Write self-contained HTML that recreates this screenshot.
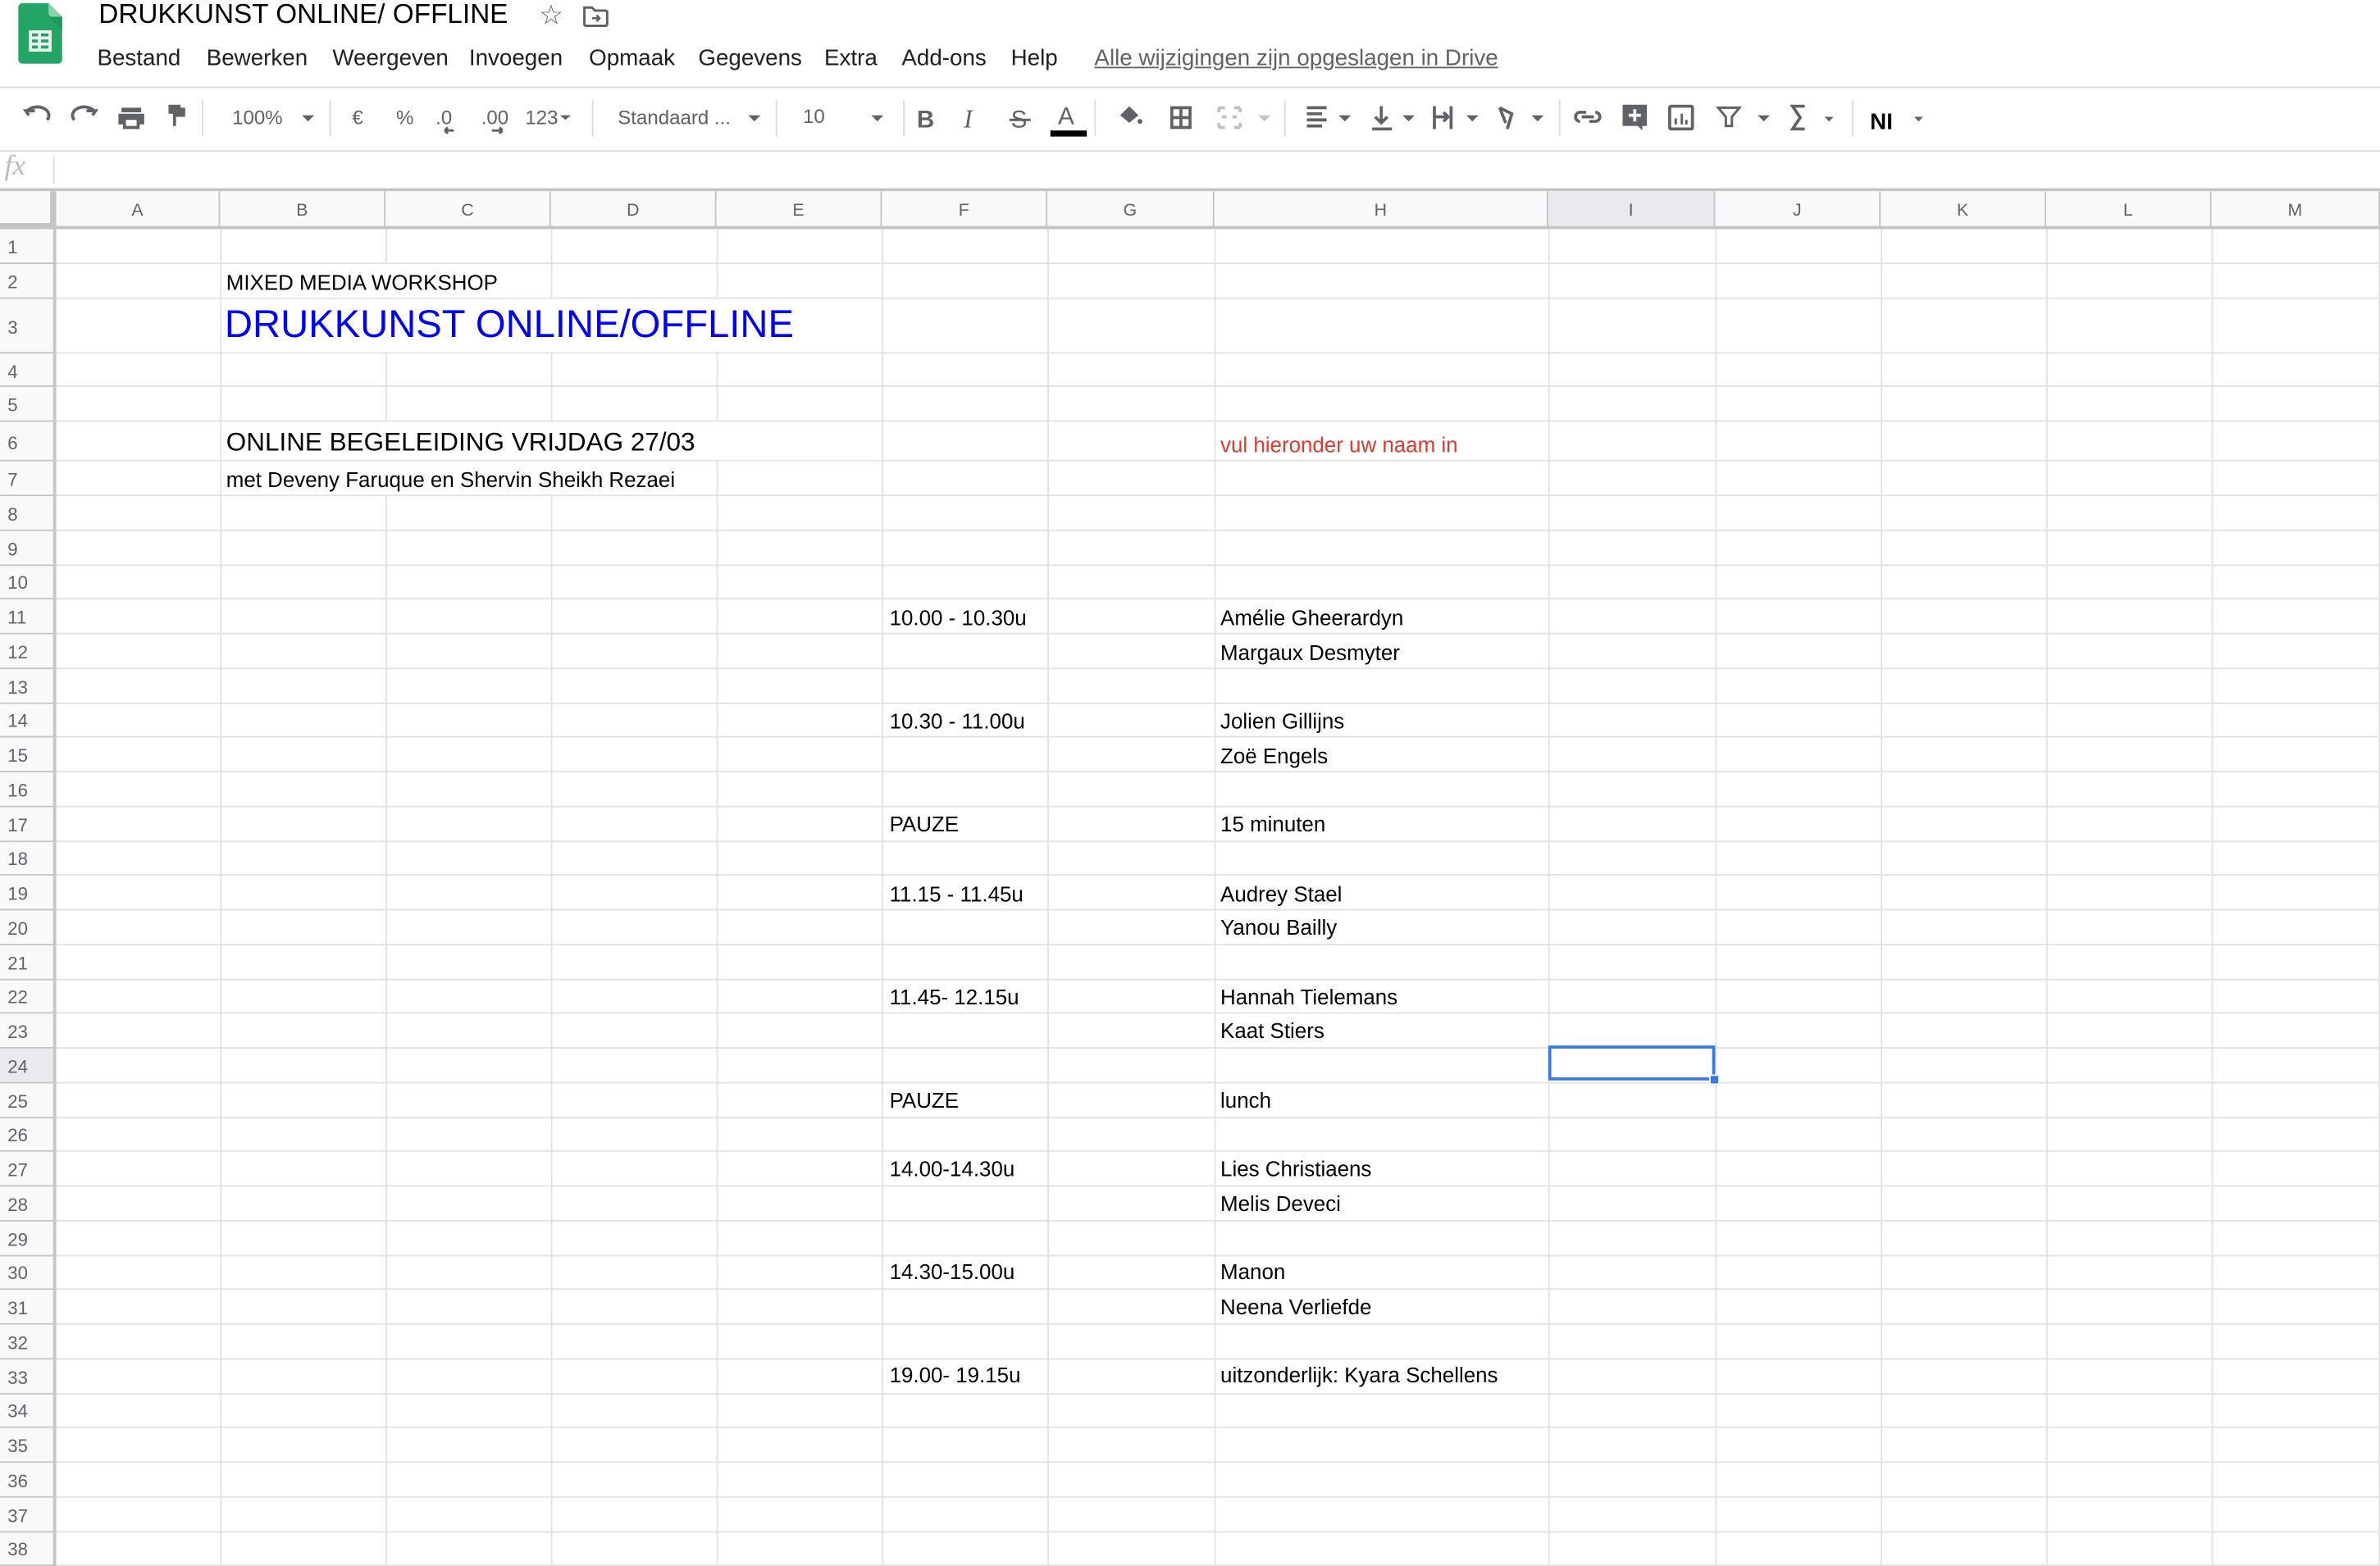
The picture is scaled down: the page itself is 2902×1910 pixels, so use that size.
<!DOCTYPE html>
<html><head><meta charset="utf-8">
<style>
*{margin:0;padding:0;box-sizing:border-box}
html,body{width:2902px;height:1910px;overflow:hidden;background:#fff}
#w{position:absolute;left:0;top:0;width:1568px;height:1032px;overflow:hidden;transform:scale(1.8508);transform-origin:0 0;font-family:"Liberation Sans",Arial,sans-serif;color:#000}
.a{position:absolute;white-space:nowrap}
.menu{top:30px;font-size:15px;color:#202124}
.rows{position:absolute;left:0;top:151px;width:1568px}
.r{position:relative;border-bottom:1px solid #e2e2e2}
.rn{position:absolute;left:0;top:0;bottom:-1px;width:37px;background:#f8f9fa;border-right:2px solid #c4c4c4;border-bottom:1px solid #c4c4c4;font-size:12px;color:#5f6368;padding-left:5px;padding-top:2px;display:flex;align-items:center}
.v{position:absolute;top:151px;width:1px;height:881px;background:#e2e2e2}
.ch{position:absolute;top:126px;height:25px;font-size:11.5px;color:#5f6368;display:flex;align-items:center;justify-content:center;border-right:1px solid #c4c4c4}
.t{position:absolute;font-size:14px;white-space:nowrap}
</style></head><body><div id="w">
<svg class="a" style="left:12px;top:2px" width="29" height="40" viewBox="0 0 29 40"><path d="M3 0h17l9 9v28a3 3 0 0 1-3 3H3a3 3 0 0 1-3-3V3a3 3 0 0 1 3-3z" fill="#23a566"/><path d="M20 0l9 9h-7a2 2 0 0 1-2-2z" fill="#8ed1b1"/><path d="M20 9l9 9V9z" fill="#1c8a55" opacity=".5"/><rect x="7" y="18" width="15" height="14" fill="#f1f1f1"/><g fill="#23a566"><rect x="9" y="20" width="4" height="2"/><rect x="15" y="20" width="5" height="2"/><rect x="9" y="24" width="4" height="2"/><rect x="15" y="24" width="5" height="2"/><rect x="9" y="28" width="4" height="2"/><rect x="15" y="28" width="5" height="2"/></g></svg>
<div class="a" style="left:65px;top:-1px;font-size:18px;color:#000">DRUKKUNST ONLINE/ OFFLINE</div>
<div class="a" style="left:355px;top:0px;font-size:18px;color:#5f6368">☆</div>
<svg class="a" style="left:384px;top:4px" width="17" height="14" viewBox="0 0 17 14"><path d="M1 1h5l2 2h7a1 1 0 0 1 1 1v8a1 1 0 0 1-1 1H2a1 1 0 0 1-1-1z" fill="none" stroke="#5f6368" stroke-width="1.6"/><path d="M6 8h5M9 6l2 2-2 2" fill="none" stroke="#5f6368" stroke-width="1.4"/></svg>
<div class="a menu" style="left:64px">Bestand</div>
<div class="a menu" style="left:136px">Bewerken</div>
<div class="a menu" style="left:219px">Weergeven</div>
<div class="a menu" style="left:309px">Invoegen</div>
<div class="a menu" style="left:388px">Opmaak</div>
<div class="a menu" style="left:460px">Gegevens</div>
<div class="a menu" style="left:543px">Extra</div>
<div class="a menu" style="left:594px">Add-ons</div>
<div class="a menu" style="left:666px">Help</div>
<div class="a menu" style="left:721px;color:#5f6368;text-decoration:underline;font-size:15px">Alle wijzigingen zijn opgeslagen in Drive</div>
<div class="a" style="left:0;top:57px;width:1568px;height:1px;background:#dadce0"></div>
<svg class="a" style="left:0;top:58px" width="1568" height="41" viewBox="0 58 1568 41" font-family="Liberation Sans,Arial,sans-serif">
<g fill="none" stroke="#5f6368" stroke-width="2">
<path d="M19 76l-2-3h6M18 73a7 5 0 0 1 13 6"/>
<path d="M61 76l2-3h-6M62 73a7 5 0 0 0-13 6"/>
</g>
<g fill="#5f6368">
<path d="M80 71h13v3H80z"/><path d="M78 75h17v7h-3v3H81v-3h-3z"/><rect x="83" y="79" width="7" height="4" fill="#fff"/>
<path d="M111 69h8v6h-8zM119 71h3v6h-6v6h-2v-8h5z"/>
<path d="M199 76h8l-4 4z"/><path d="M493 76h8l-4 4z"/><path d="M574 76h8l-4 4z"/>
<path d="M369 76h7l-3.5 3z"/>
<path d="M829 76h8l-4 4z" fill="#c0c0c0"/>
<path d="M882 76h8l-4 4z"/><path d="M924 76h8l-4 4z"/><path d="M966 76h8l-4 4z"/><path d="M1009 76h8l-4 4z"/>
<path d="M1158 76h8l-4 4z"/><path d="M1202 77h6l-3 3z"/><path d="M1261 77h6l-3 3z"/>
</g>
<g fill="#5f6368" font-size="13">
<text x="153" y="82">100%</text>
<text x="232" y="82">€</text>
<text x="261" y="82">%</text>
<text x="287" y="82">.0</text>
<text x="317" y="82">.00</text>
<text x="346" y="82">123</text>
<text x="407" y="82">Standaard ...</text>
<text x="529" y="81">10</text>
<text x="604" y="84" font-weight="bold" font-size="16">B</text>
<text x="635" y="84" font-style="italic" font-size="17" font-family="Liberation Serif,serif">I</text>
<text x="666" y="84" font-size="16">S</text>
<text x="697" y="82" font-size="16">A</text>
</g>
<path d="M665 79h14" stroke="#5f6368" stroke-width="1.6"/>
<rect x="692" y="86" width="24" height="4" fill="#000"/>
<g stroke="#5f6368" stroke-width="1.6" fill="none">
<path d="M293 86h6M293 86l2-2M293 86l2 2"/><path d="M324 86h7M331 86l-2-2M331 86l-2 2"/>
</g>
<g fill="#5f6368"><path d="M738 76l6-6 6 6-6 5z"/><circle cx="751" cy="80" r="1.6"/></g>
<g fill="none" stroke="#5f6368" stroke-width="2"><rect x="772" y="71" width="12" height="13"/><path d="M778 71v13M772 77.5h12"/></g>
<g fill="none" stroke="#c0c0c0" stroke-width="2"><path d="M803 71h4M813 71h4M803 84h4M813 84h4M803 71v3M817 71v3M803 81v3M817 81v3M805 77h3M812 77h3"/></g>
<g stroke="#5f6368" stroke-width="2" fill="none">
<path d="M861 71h13M861 75h10M861 79h13M861 83h10"/>
<path d="M910 70v11M906 77l4 4 4-4M904 85h13"/>
<path d="M945 70v15M956 70v15M946 77h8M951 74l3 3-3 3"/>
<path d="M988 71l8 4-3 10M988 71l4 10"/>
<path d="M1041 77a3 3 0 0 1 0-6h4M1051 71a3 3 0 0 1 0 6h-4M1042 74h8" transform="translate(0,3)"/>
<rect x="1100" y="70" width="15" height="15" rx="1"/>
<path d="M1104 82v-4M1108 82v-7M1111 82v-3" stroke-width="1.6"/>
<path d="M1132 71h14l-5 6v6h-4v-6z" stroke-width="1.6"/>
<path d="M1189 70h-8l5 7.5-5 7.5h8"/>
</g>
<path d="M1069 69h16v14h-3v3l-3-3h-10z" fill="#5f6368"/><path d="M1077 72v8M1073 76h8" stroke="#fff" stroke-width="2"/>
<text x="1232" y="85" font-size="15" font-weight="bold">NI</text>
<g fill="#dadce0"><rect x="133" y="66" width="1" height="24"/><rect x="217" y="66" width="1" height="24"/><rect x="390" y="66" width="1" height="24"/><rect x="511" y="66" width="1" height="24"/><rect x="595" y="66" width="1" height="24"/><rect x="721" y="66" width="1" height="24"/><rect x="846" y="66" width="1" height="24"/><rect x="1027" y="66" width="1" height="24"/><rect x="1220" y="66" width="1" height="24"/></g>
</svg>
<div class="a" style="left:0;top:99px;width:1568px;height:1px;background:#dadce0"></div>
<div class="a" style="left:3px;top:99px;font-size:19px;color:#bbb;font-style:italic;font-family:'Liberation Serif',serif">fx</div>
<div class="a" style="left:35px;top:103px;width:1px;height:18px;background:#dadce0"></div>
<div class="a" style="left:0;top:124px;width:1568px;height:2px;background:#c4c4c4"></div>
<div class="a" style="left:0;top:126px;width:1568px;height:25px;background:#f8f9fa;border-bottom:2px solid #c4c4c4"></div>
<div class="a" style="left:0;top:126px;width:37px;height:25px;background:#f8f9fa;border-right:4px solid #c4c4c4;border-bottom:4px solid #c4c4c4"></div>
<div class="ch" style="left:37px;width:108px">A</div>
<div class="ch" style="left:145px;width:109px">B</div>
<div class="ch" style="left:254px;width:109px">C</div>
<div class="ch" style="left:363px;width:109px">D</div>
<div class="ch" style="left:472px;width:109px">E</div>
<div class="ch" style="left:581px;width:109px">F</div>
<div class="ch" style="left:690px;width:110px">G</div>
<div class="ch" style="left:800px;width:220px">H</div>
<div class="ch" style="left:1020px;width:110px;background:#e8eaed">I</div>
<div class="ch" style="left:1130px;width:109px">J</div>
<div class="ch" style="left:1239px;width:109px">K</div>
<div class="ch" style="left:1348px;width:109px">L</div>
<div class="ch" style="left:1457px;width:111px">M</div>
<div class="a" style="left:0;top:149px;width:1568px;height:2px;background:#c4c4c4"></div>
<div class="v" style="left:145px"></div><div class="v" style="left:254px"></div><div class="v" style="left:363px"></div><div class="v" style="left:472px"></div><div class="v" style="left:581px"></div><div class="v" style="left:690px"></div><div class="v" style="left:800px"></div><div class="v" style="left:1020px"></div><div class="v" style="left:1130px"></div><div class="v" style="left:1239px"></div><div class="v" style="left:1348px"></div><div class="v" style="left:1457px"></div><div class="v" style="left:1567px"></div>
<div class="rows">
<div class="r" style="height:23px"><div class="rn">1</div></div>
<div class="r" style="height:23px"><div class="rn">2</div></div>
<div class="r" style="height:36px"><div class="rn">3</div></div>
<div class="r" style="height:22px"><div class="rn">4</div></div>
<div class="r" style="height:23px"><div class="rn">5</div></div>
<div class="r" style="height:26px"><div class="rn">6</div></div>
<div class="r" style="height:23px"><div class="rn">7</div></div>
<div class="r" style="height:22.75px"><div class="rn">8</div></div>
<div class="r" style="height:22.75px"><div class="rn">9</div></div>
<div class="r" style="height:22.75px"><div class="rn">10</div></div>
<div class="r" style="height:22.75px"><div class="rn">11</div></div>
<div class="r" style="height:22.75px"><div class="rn">12</div></div>
<div class="r" style="height:22.75px"><div class="rn">13</div></div>
<div class="r" style="height:22.75px"><div class="rn">14</div></div>
<div class="r" style="height:22.75px"><div class="rn">15</div></div>
<div class="r" style="height:22.75px"><div class="rn">16</div></div>
<div class="r" style="height:22.75px"><div class="rn">17</div></div>
<div class="r" style="height:22.75px"><div class="rn">18</div></div>
<div class="r" style="height:22.75px"><div class="rn">19</div></div>
<div class="r" style="height:22.75px"><div class="rn">20</div></div>
<div class="r" style="height:22.75px"><div class="rn">21</div></div>
<div class="r" style="height:22.75px"><div class="rn">22</div></div>
<div class="r" style="height:22.75px"><div class="rn">23</div></div>
<div class="r" style="height:22.75px"><div class="rn" style="background:#e8eaed">24</div></div>
<div class="r" style="height:22.75px"><div class="rn">25</div></div>
<div class="r" style="height:22.75px"><div class="rn">26</div></div>
<div class="r" style="height:22.75px"><div class="rn">27</div></div>
<div class="r" style="height:22.75px"><div class="rn">28</div></div>
<div class="r" style="height:22.75px"><div class="rn">29</div></div>
<div class="r" style="height:22.75px"><div class="rn">30</div></div>
<div class="r" style="height:22.75px"><div class="rn">31</div></div>
<div class="r" style="height:22.75px"><div class="rn">32</div></div>
<div class="r" style="height:22.75px"><div class="rn">33</div></div>
<div class="r" style="height:22.75px"><div class="rn">34</div></div>
<div class="r" style="height:22.75px"><div class="rn">35</div></div>
<div class="r" style="height:22.75px"><div class="rn">36</div></div>
<div class="r" style="height:22.75px"><div class="rn">37</div></div>
<div class="r" style="height:22.75px"><div class="rn">38</div></div>
<div class="r" style="height:22.75px"><div class="rn">39</div></div>
</div>
<div class="a" style="left:146px;top:174px;width:216px;height:22px;background:#fff"></div>
<div class="a" style="left:146px;top:197px;width:434px;height:35px;background:#fff"></div>
<div class="a" style="left:146px;top:278px;width:434px;height:25px;background:#fff"></div>
<div class="a" style="left:146px;top:304px;width:326px;height:22px;background:#fff"></div>
<div class="t" style="left:149px;top:178px">MIXED MEDIA WORKSHOP</div>
<div class="t" style="left:148px;top:200px;font-size:25.5px;color:#0000ff">DRUKKUNST ONLINE/OFFLINE</div>
<div class="t" style="left:149px;top:282px;font-size:17px">ONLINE BEGELEIDING VRIJDAG 27/03</div>
<div class="t" style="left:149px;top:308px;font-size:14px">met Deveny Faruque en Shervin Sheikh Rezaei</div>
<div class="t" style="left:804px;top:285px;color:#e0392b">vul hieronder uw naam in</div>
<div class="t" style="left:586px;top:399px">10.00 - 10.30u</div><div class="t" style="left:804px;top:399px">Amélie Gheerardyn</div>
<div class="t" style="left:804px;top:421.7px">Margaux Desmyter</div>
<div class="t" style="left:586px;top:467px">10.30 - 11.00u</div><div class="t" style="left:804px;top:467px">Jolien Gillijns</div>
<div class="t" style="left:804px;top:489.8px">Zoë Engels</div>
<div class="t" style="left:586px;top:535.2px">PAUZE</div><div class="t" style="left:804px;top:535.2px">15 minuten</div>
<div class="t" style="left:586px;top:580.6px">11.15 - 11.45u</div><div class="t" style="left:804px;top:580.6px">Audrey Stael</div>
<div class="t" style="left:804px;top:603.3px">Yanou Bailly</div>
<div class="t" style="left:586px;top:648.7px">11.45- 12.15u</div><div class="t" style="left:804px;top:648.7px">Hannah Tielemans</div>
<div class="t" style="left:804px;top:671.4px">Kaat Stiers</div>
<div class="t" style="left:586px;top:716.8px">PAUZE</div><div class="t" style="left:804px;top:716.8px">lunch</div>
<div class="t" style="left:586px;top:762.2px">14.00-14.30u</div><div class="t" style="left:804px;top:762.2px">Lies Christiaens</div>
<div class="t" style="left:804px;top:784.9px">Melis Deveci</div>
<div class="t" style="left:586px;top:830.3px">14.30-15.00u</div><div class="t" style="left:804px;top:830.3px">Manon</div>
<div class="t" style="left:804px;top:853px">Neena Verliefde</div>
<div class="t" style="left:586px;top:898.4px">19.00- 19.15u</div><div class="t" style="left:804px;top:898.4px">uitzonderlijk: Kyara Schellens</div>
<div class="a" style="left:1020px;top:689px;width:110px;height:23px;border:2px solid #3b78e7"></div>
<div class="a" style="left:1126px;top:708px;width:7px;height:7px;background:#3b78e7;border:1px solid #fff"></div>
</div></body></html>
